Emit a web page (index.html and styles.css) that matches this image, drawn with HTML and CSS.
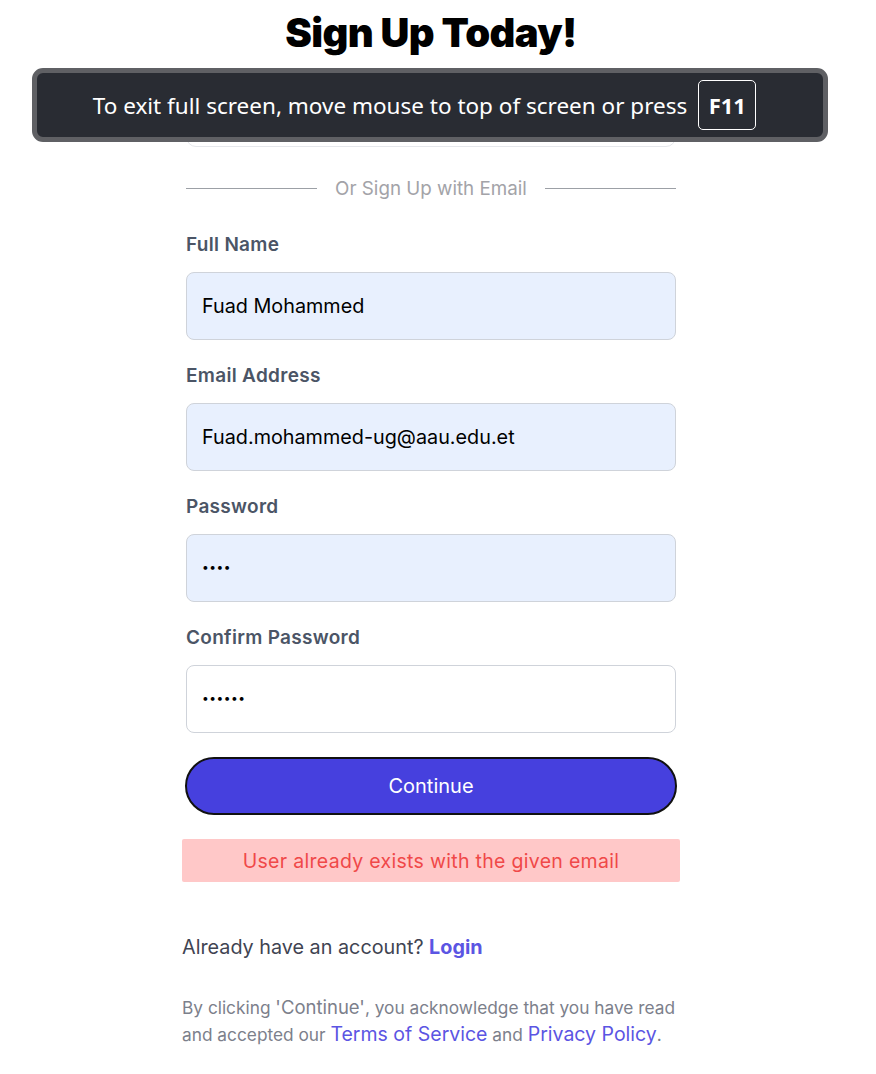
FILE: index.html
```html
<!DOCTYPE html>
<html lang="en">
<head>
<meta charset="utf-8">
<title>Sign Up</title>
<link rel="stylesheet" href="styles.css">
</head>
<body>
<main class="page">
  <h1 class="title">Sign Up Today!</h1>
  <div class="form">
    <button class="google" type="button"></button>
    <div class="divider"><span class="line"></span><span class="divider-text">Or Sign Up with Email</span><span class="line"></span></div>
    <label class="field">
      <span class="label">Full Name</span>
      <span class="input filled">Fuad Mohammed</span>
    </label>
    <label class="field">
      <span class="label">Email Address</span>
      <span class="input filled">Fuad.mohammed-ug@aau.edu.et</span>
    </label>
    <label class="field">
      <span class="label">Password</span>
      <span class="input filled dots">••••</span>
    </label>
    <label class="field">
      <span class="label">Confirm Password</span>
      <span class="input dots">••••••</span>
    </label>
    <button class="continue" type="button">Continue</button>
  </div>
  <div class="error">User already exists with the given email</div>
  <p class="login">Already have an account? <a class="login-link" href="#">Login</a></p>
  <p class="terms">By clicking <span class="quote">'Continue'</span>, you acknowledge that you have read and accepted our <a class="terms-link" href="#">Terms of Service</a> and <a class="terms-link" href="#">Privacy Policy</a>.</p>
</main>
<div class="fs-notice">
  <span class="fs-text">To exit full screen, move mouse to top of screen or press</span>
  <span class="fs-key">F11</span>
</div>
</body>
</html>
```
FILE: styles.css
```css
* { box-sizing: border-box; }
html, body { margin: 0; padding: 0; background: #fff; }
body { font-family: Inter, "Noto Sans", sans-serif; color: #111; }

.page {
  width: 498px;
  margin-left: 182px;
  padding-top: 8px;
}

.title {
  margin: 0;
  text-align: center;
  font-family: Inter, sans-serif;
  font-weight: 900;
  font-size: 40px;
  line-height: 50px;
  letter-spacing: -0.6px;
  color: #000;
}

.form {
  padding: 0 4px;
  display: flex;
  flex-direction: column;
}

.google {
  margin-top: 30px;
  height: 59px;
  border: 1px solid #e5e7eb;
  border-radius: 10px;
  background: #fff;
}

.divider {
  display: flex;
  align-items: center;
  gap: 18px;
  margin-top: 27px;
  margin-bottom: 7px;
  height: 28px;
}
.line { flex: 1; height: 1px; background: #9ca0a6; }
.divider-text { color: #a3a3a8; font-size: 18.8px; }

.field {
  display: flex;
  flex-direction: column;
  margin-top: 23px;
}
.label {
  font-size: 19px;
  font-weight: 600;
  letter-spacing: 0.3px;
  color: #4b5566;
  line-height: 26px;
  margin-bottom: 14px;
}
.input {
  height: 68px;
  border: 1px solid #cfd3da;
  border-radius: 8px;
  background: #fff;
  padding: 0 15px;
  display: flex;
  align-items: center;
  font-size: 19.8px;
  color: #000;
}
.input.filled { background: #e8f0fe; }
.dots { font-size: 12px; letter-spacing: 0.5px; padding-bottom: 4px; }

.continue {
  margin: 24px -1px 0;
  height: 58px;
  border: 2px solid #111;
  border-radius: 30px;
  background: #4640de;
  color: #fff;
  font-family: Inter, sans-serif;
  font-size: 20px;
}

.error {
  margin-top: 24px;
  height: 43px;
  background: #ffc8c8;
  border-radius: 2px;
  color: #f04848;
  font-size: 19.5px;
  letter-spacing: 0.3px;
  display: flex;
  align-items: center;
  justify-content: center;
}

.login {
  margin: 52px 0 0;
  font-size: 19.8px;
  color: #3f4452;
  line-height: 26px;
}
.login-link { color: #5b55e3; font-weight: 700; text-decoration: none; }

.terms {
  margin: 34px 0 0;
  font-size: 17.3px;
  line-height: 27px;
  color: #7c808b;
}
.quote { font-size: 18.5px; line-height: 1; }
.terms-link { color: #5b55e3; text-decoration: none; font-size: 19.5px; line-height: 1; }

.fs-notice {
  position: absolute;
  left: 32px;
  top: 68px;
  width: 796px;
  height: 74px;
  border: 5px solid #5f6064;
  border-radius: 11px;
  background: #292c33;
  display: flex;
  align-items: center;
  justify-content: center;
  gap: 11px;
  padding-right: 11px;
  font-family: "Noto Sans", sans-serif;
  color: #fff;
}
.fs-text { font-size: 22.5px; }
.fs-key {
  border: 1px solid #fff;
  border-radius: 5px;
  width: 58px;
  height: 50px;
  display: flex;
  align-items: center;
  justify-content: center;
  font-weight: 700;
  font-size: 22px;
}
```
